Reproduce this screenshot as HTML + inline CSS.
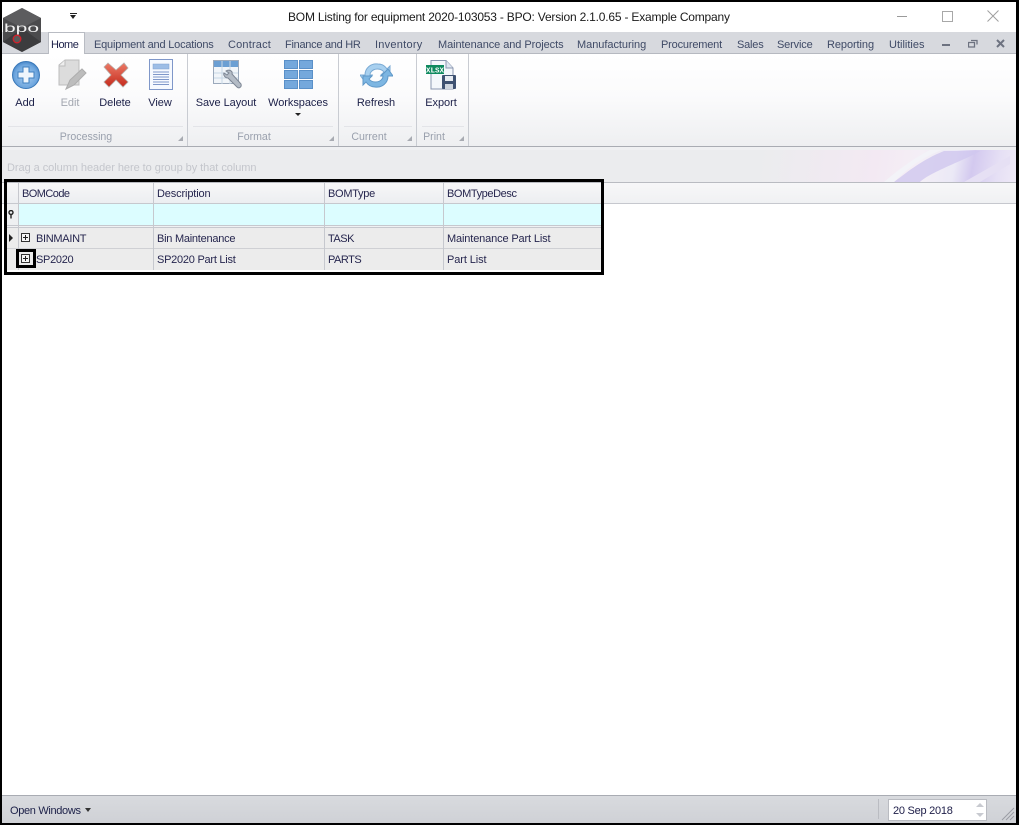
<!DOCTYPE html>
<html><head><meta charset="utf-8">
<style>
html,body{margin:0;padding:0;width:1019px;height:825px;overflow:hidden;background:#fff}
body{position:relative;font-family:"Liberation Sans",sans-serif;font-size:11px;color:#20204a}
.a{position:absolute}
.t{position:absolute;white-space:nowrap;line-height:14px}
.tab{top:38px;color:#3f4a66;font-size:11px}
.lb{top:96px;color:#1c2048;transform:translateX(-50%);letter-spacing:-.05px}
.cap{top:130px;color:#9aa0ad;transform:translateX(-50%);font-size:10.6px}
.sep{position:absolute;top:54px;width:1px;height:92px;background:#c9ccd2}
.capl{position:absolute;top:126px;height:1px;background:#e3e4e8}
.grip{position:absolute;top:136px;width:0;height:0;border-style:solid;border-width:0 0 5px 5px;border-color:transparent transparent #a8abb2 transparent}
.v{position:absolute;width:1px;background:#c6c8ce}
.g{color:#26264e;font-size:11px}
</style></head><body>

<!-- title bar -->
<div class="a" style="left:70px;top:13px;width:7px;height:1px;background:#222"></div>
<div class="a" style="left:70px;top:15px;width:0;height:0;border:3.5px solid transparent;border-top:4px solid #222;border-bottom:0"></div>
<div class="t" style="left:288px;top:10px;font-size:12px;color:#1a1a1a;letter-spacing:-.2px">BOM Listing for equipment 2020-103053 - BPO: Version 2.1.0.65 - Example Company</div>
<div class="a" style="left:897px;top:16px;width:10px;height:1px;background:#9a9a9a"></div>
<div class="a" style="left:942px;top:11px;width:9px;height:9px;border:1px solid #a8a8a8"></div>
<svg class="a" style="left:987px;top:10px" width="12" height="12"><path d="M.5,.5L11.5,11.5M11.5,.5L.5,11.5" stroke="#a0a0a0" fill="none"/></svg>

<!-- tab strip -->
<div class="a" style="left:2px;top:32px;width:1015px;height:21px;background:#d7d9de;border-bottom:1px solid #b6b9c0"></div>
<div class="a" style="left:48px;top:32px;width:37px;height:22px;background:#fff;border:1px solid #b9bcc3;border-bottom:0;box-sizing:border-box"></div>
<div class="t tab" style="left:51px;color:#1c2048;letter-spacing:-.5px">Home</div>
<div class="t tab" style="left:94px;letter-spacing:-.2px">Equipment and Locations</div>
<div class="t tab" style="left:228px;letter-spacing:.18px">Contract</div>
<div class="t tab" style="left:285px;letter-spacing:-.28px">Finance and HR</div>
<div class="t tab" style="left:375px;letter-spacing:.25px">Inventory</div>
<div class="t tab" style="left:438px;letter-spacing:-.07px">Maintenance and Projects</div>
<div class="t tab" style="left:577px;letter-spacing:-.04px">Manufacturing</div>
<div class="t tab" style="left:661px;letter-spacing:-.18px">Procurement</div>
<div class="t tab" style="left:737px;letter-spacing:-.2px">Sales</div>
<div class="t tab" style="left:777px;letter-spacing:-.15px">Service</div>
<div class="t tab" style="left:827px;letter-spacing:-.08px">Reporting</div>
<div class="t tab" style="left:889px">Utilities</div>
<div class="a" style="left:942px;top:44px;width:8px;height:2px;background:#6d7280"></div>
<svg class="a" style="left:968px;top:39px" width="10" height="9"><path d="M3,1.5H9V5.5M.5,3.5H6.5V8H.5Z" fill="none" stroke="#6d7280" stroke-width="1.3"/></svg>
<svg class="a" style="left:996px;top:39px" width="9" height="9"><path d="M1,1L8,8M8,1L1,8" stroke="#6d7280" stroke-width="2" fill="none"/></svg>

<!-- ribbon -->
<div class="a" style="left:2px;top:54px;width:1015px;height:92px;background:linear-gradient(#fff 0,#fbfbfc 45%,#eeeff1 100%);border-bottom:1px solid #a9acb3"></div>
<div class="a" style="left:2px;top:147px;width:1015px;height:3px;background:#eff0f2;border-bottom:1px solid #b4b6bc"></div>
<div class="sep" style="left:187px"></div><div class="sep" style="left:338px"></div><div class="sep" style="left:416px"></div><div class="sep" style="left:468px"></div>
<div class="capl" style="left:8px;width:175px"></div><div class="capl" style="left:193px;width:140px"></div><div class="capl" style="left:344px;width:68px"></div><div class="capl" style="left:422px;width:42px"></div>

<!-- logo -->
<svg class="a" style="left:0;top:0" width="46" height="56" viewBox="0 0 46 56">
<polygon points="22,8 41,18 41,42 22,52 3,42 3,18" fill="#4b4b4d"/>
<polygon points="22,8 41,18 22,28 3,18" fill="#5c5c5e"/>
<polygon points="22,28 41,42 22,52 3,42" fill="#3c3c3e"/>
<text x="4" y="32" font-family="Liberation Sans,sans-serif" font-size="12" fill="#f0f0f0" textLength="35" lengthAdjust="spacingAndGlyphs">bpo</text>
<circle cx="17" cy="39" r="3.8" fill="#5a5a5a" stroke="#d4202a" stroke-width="1.3"/>
</svg>

<!-- Add -->
<svg class="a" style="left:11px;top:60px" width="30" height="30" viewBox="0 0 30 30">
<defs><radialGradient id="b" cx=".5" cy=".55" r=".6"><stop offset="0" stop-color="#a9cef0"/><stop offset=".7" stop-color="#6ea6de"/><stop offset="1" stop-color="#3a7cc2"/></radialGradient></defs>
<circle cx="15" cy="15" r="13.5" fill="url(#b)" stroke="#3a78b8"/>
<path d="M12,7H18V12H23V18H18V23H12V18H7V12H12Z" fill="#eef5fc" stroke="#3f7fbf"/></svg>
<!-- Edit -->
<svg class="a" style="left:58px;top:59px" width="30" height="32" viewBox="0 0 30 32">
<path d="M1,6L7,1H21V26H1Z" fill="#dcdcdc" stroke="#bdbdbd"/><path d="M1,7H7V1" fill="#eee" stroke="#bbb"/>
<path d="M8,30L12,21L24,10L28,14L16,26Z" fill="#bdbdbd" stroke="#adadad"/></svg>
<!-- Delete -->
<svg class="a" style="left:103px;top:62px" width="26" height="26" viewBox="0 0 26 26">
<defs><linearGradient id="r" x1="0" y1="0" x2="0" y2="1"><stop offset="0" stop-color="#ec7a66"/><stop offset="1" stop-color="#c42a1c"/></linearGradient></defs>
<path d="M5,1L13,8L21,1L25,6L18,13L25,20L20,25L13,18L6,25L1,20L8,13L1,5Z" fill="url(#r)" stroke="#b9b0ac" stroke-width=".8"/></svg>
<!-- View -->
<svg class="a" style="left:149px;top:59px" width="24" height="31" viewBox="0 0 24 31">
<rect x=".5" y=".5" width="23" height="30" fill="#f6f9fe" stroke="#7f97c9"/>
<rect x="4" y="5" width="16" height="5" fill="#9dbde6" stroke="#7f9fd0" stroke-width=".5"/>
<path d="M4,13H20M4,15.5H20M4,18H20M4,20.5H20M4,23H20M4,25.5H20" stroke="#7f97c9"/></svg>
<!-- Save Layout -->
<svg class="a" style="left:213px;top:60px" width="30" height="32" viewBox="0 0 30 32">
<rect x=".5" y=".5" width="25" height="23" fill="#f1f5f9" stroke="#9ba9bb"/><rect x="1" y="1" width="24" height="6" fill="#6b9fd3"/>
<path d="M1,13H25M1,18H25M9,1V24M17,1V24" stroke="#c8d7e5"/>
<path d="M13,11C16,9 20,11 19,14L28,24C29,27 26,29 24,27L15,18C12,18 10,15 11,13L14,15L16,13Z" fill="#b4bcc6" stroke="#7d8694"/></svg>
<!-- Workspaces -->
<svg class="a" style="left:284px;top:60px" width="29" height="29" viewBox="0 0 29 29">
<g fill="#74a8dc" stroke="#5a90c8"><rect x=".5" y=".5" width="13" height="8"/><rect x="15.5" y=".5" width="13" height="8"/><rect x=".5" y="10.5" width="13" height="8"/><rect x="15.5" y="10.5" width="13" height="8"/><rect x=".5" y="20.5" width="13" height="8"/><rect x="15.5" y="20.5" width="13" height="8"/></g></svg>
<div class="a" style="left:295px;top:113px;width:0;height:0;border:3px solid transparent;border-top:3px solid #222;border-bottom:0"></div>
<!-- Refresh -->
<svg class="a" style="left:360px;top:62px" width="33" height="27" viewBox="0 0 33 27">
<path d="M5,13C5,6 11,1 18,2C22,2 25,4 27,7L30,4V13H21L24,10C21,6 14,6 11,10C10,11 10,12 10,13L12,13L5,20L0,13Z" fill="#a8d0ef" stroke="#7aaad4"/>
<path d="M28,14C28,21 22,26 15,25C11,25 8,23 6,20L3,23V14H12L9,17C12,21 19,21 22,17C23,16 23,15 23,14L21,14L28,7L33,14Z" fill="#7db6e2" stroke="#5f98c8"/></svg>
<!-- Export -->
<svg class="a" style="left:426px;top:60px" width="31" height="30" viewBox="0 0 31 30">
<path d="M5,.5H20L27,8V29H5Z" fill="#f4f7fb" stroke="#8a97b0"/><path d="M20,.5V8H27" fill="#dfe6f0" stroke="#8a97b0"/>
<rect x="0" y="5" width="18" height="9" fill="#0f8a5f"/>
<text x="9" y="12.3" font-family="Liberation Mono,monospace" font-size="7.5" font-weight="bold" fill="#fff" text-anchor="middle">XLSX</text>
<rect x="16" y="15" width="14" height="14" rx="1" fill="#3f5272"/><rect x="19" y="16" width="8" height="5" fill="#e8ecf2"/><rect x="19" y="24" width="8" height="5" fill="#cfd6e0"/></svg>

<div class="t lb" style="left:25px">Add</div>
<div class="t lb" style="left:70px;color:#a3a7b0">Edit</div>
<div class="t lb" style="left:115px">Delete</div>
<div class="t lb" style="left:160px">View</div>
<div class="t lb" style="left:226px">Save Layout</div>
<div class="t lb" style="left:298px">Workspaces</div>
<div class="t lb" style="left:376px">Refresh</div>
<div class="t lb" style="left:441px">Export</div>
<div class="t cap" style="left:86px">Processing</div>
<div class="t cap" style="left:254px">Format</div>
<div class="t cap" style="left:369px">Current</div>
<div class="t cap" style="left:434px">Print</div>
<div class="grip" style="left:178px"></div><div class="grip" style="left:329px"></div><div class="grip" style="left:407px"></div><div class="grip" style="left:459px"></div>

<!-- group panel -->
<div class="a" style="left:2px;top:150px;width:1015px;height:32px;background:#ebecee;border-bottom:1px solid #b9bbc1"></div>
<div class="a" style="left:760px;top:150px;width:257px;height:32px;background:linear-gradient(100deg,#ebecee 0,#f3e9f3 45%,#f4eff6 62%,#ebe9f6 75%,#d3c9ef 82%,#e6e0f5 92%,#efeaf6 100%)"></div>
<svg class="a" style="left:880px;top:150px" width="137" height="32"><path d="M14,32C30,20 42,10 64,1H100C90,8 50,22 40,32Z" fill="#d0c7ef" opacity=".8"/><path d="M14,32C26,20 40,8 62,0H50C34,8 18,20 4,32Z" fill="#f3f3f8"/><path d="M84,32L130,6V14L100,32Z" fill="#e6e0f4"/></svg>
<div class="t" style="left:7px;top:161px;color:#c4c6cc;letter-spacing:-.05px">Drag a column header here to group by that column</div>

<!-- grid -->
<div class="a" style="left:2px;top:183px;width:1015px;height:20px;background:linear-gradient(#f7f7f8,#f0f1f3);border-bottom:1px solid #c6c8ce"></div>
<div class="a" style="left:7px;top:183px;width:594px;height:20px;background:linear-gradient(#f7f7f8,#eceef1);border-bottom:1px solid #c6c8ce"></div>
<div class="a" style="left:19px;top:204px;width:582px;height:21px;background:#dcfdff"></div>
<div class="a" style="left:7px;top:204px;width:12px;height:21px;background:#eef0f2"></div>
<div class="a" style="left:7px;top:225px;width:594px;height:1px;background:#c6c8ce"></div>
<div class="a" style="left:7px;top:226px;width:594px;height:2px;background:#f0f1f3"></div>
<div class="a" style="left:7px;top:228px;width:594px;height:42px;background:#ececec"></div>
<div class="a" style="left:7px;top:227px;width:594px;height:1px;background:#c6c8ce"></div>
<div class="a" style="left:7px;top:248px;width:594px;height:1px;background:#cfd0d4"></div>
<div class="v" style="left:18px;top:183px;height:87px"></div>
<div class="v" style="left:153px;top:183px;height:87px"></div>
<div class="v" style="left:324px;top:183px;height:87px"></div>
<div class="v" style="left:443px;top:183px;height:87px"></div>

<div class="t g" style="left:22px;top:187px;letter-spacing:-.55px">BOMCode</div>
<div class="t g" style="left:157px;top:187px;letter-spacing:-.14px">Description</div>
<div class="t g" style="left:328px;top:187px;letter-spacing:-.28px">BOMType</div>
<div class="t g" style="left:447px;top:187px;letter-spacing:-.4px">BOMTypeDesc</div>

<svg class="a" style="left:8px;top:210px" width="6" height="9"><circle cx="3" cy="2.5" r="2" fill="none" stroke="#222" stroke-width="1.4"/><path d="M3,4V8.5" stroke="#222" stroke-width="1.4"/></svg>
<div class="a" style="left:9px;top:234px;width:0;height:0;border:4px solid transparent;border-left:4px solid #222;border-right:0"></div>

<svg class="a" style="left:21px;top:233px" width="9" height="9"><rect x=".5" y=".5" width="8" height="8" fill="#f5f5f5" stroke="#333"/><path d="M2,4.5H7M4.5,2V7" stroke="#222"/></svg>
<svg class="a" style="left:21px;top:254px" width="9" height="9"><rect x=".5" y=".5" width="8" height="8" fill="#f5f5f5" stroke="#333"/><path d="M2,4.5H7M4.5,2V7" stroke="#222"/></svg>

<div class="t g" style="left:36px;top:232px;letter-spacing:-.3px">BINMAINT</div>
<div class="t g" style="left:157px;top:232px;letter-spacing:-.25px">Bin Maintenance</div>
<div class="t g" style="left:328px;top:232px;letter-spacing:-.5px">TASK</div>
<div class="t g" style="left:447px;top:232px;letter-spacing:-.14px">Maintenance Part List</div>
<div class="t g" style="left:36px;top:253px;letter-spacing:-.3px">SP2020</div>
<div class="t g" style="left:157px;top:253px;letter-spacing:-.25px">SP2020 Part List</div>
<div class="t g" style="left:328px;top:253px;letter-spacing:-.5px">PARTS</div>
<div class="t g" style="left:447px;top:253px;letter-spacing:-.1px">Part List</div>

<!-- annotation boxes -->
<div class="a" style="left:4px;top:179px;width:600px;height:96px;box-sizing:border-box;border:3px solid #000"></div>
<div class="a" style="left:16px;top:249px;width:20px;height:19px;box-sizing:border-box;border:3px solid #000"></div>

<!-- status bar -->
<div class="a" style="left:2px;top:795px;width:1015px;height:28px;background:linear-gradient(#d8dade,#cfd1d6);border-top:1px solid #a9acb3;box-sizing:border-box"></div>
<div class="t" style="left:10px;top:804px;color:#1c2048;letter-spacing:-.33px">Open Windows</div>
<div class="a" style="left:85px;top:808px;width:0;height:0;border:3.5px solid transparent;border-top:4px solid #333;border-bottom:0"></div>
<div class="a" style="left:878px;top:799px;width:1px;height:20px;background:#babcc2"></div>
<div class="a" style="left:888px;top:799px;width:99px;height:22px;background:#fff;border:1px solid #b9bbc1;box-sizing:border-box"></div>
<div class="t" style="left:893px;top:804px;color:#20204a;letter-spacing:-.25px">20 Sep 2018</div>
<div class="a" style="left:976px;top:803px;width:0;height:0;border:4px solid transparent;border-bottom:4px solid #c8cad0;border-top:0"></div>
<div class="a" style="left:976px;top:813px;width:0;height:0;border:4px solid transparent;border-top:4px solid #c8cad0;border-bottom:0"></div>
<svg class="a" style="left:1001px;top:806px" width="14" height="15"><path d="M1,14L13,2M5,14L13,6M9,14L13,10" stroke="#9a9da4" fill="none"/></svg>

<!-- window border -->
<div class="a" style="left:0;top:0;width:1019px;height:2px;background:#000"></div>
<div class="a" style="left:0;top:823px;width:1019px;height:2px;background:#000"></div>
<div class="a" style="left:0;top:0;width:2px;height:825px;background:#000"></div>
<div class="a" style="left:1016px;top:0;width:3px;height:825px;background:#000"></div>
</body></html>
